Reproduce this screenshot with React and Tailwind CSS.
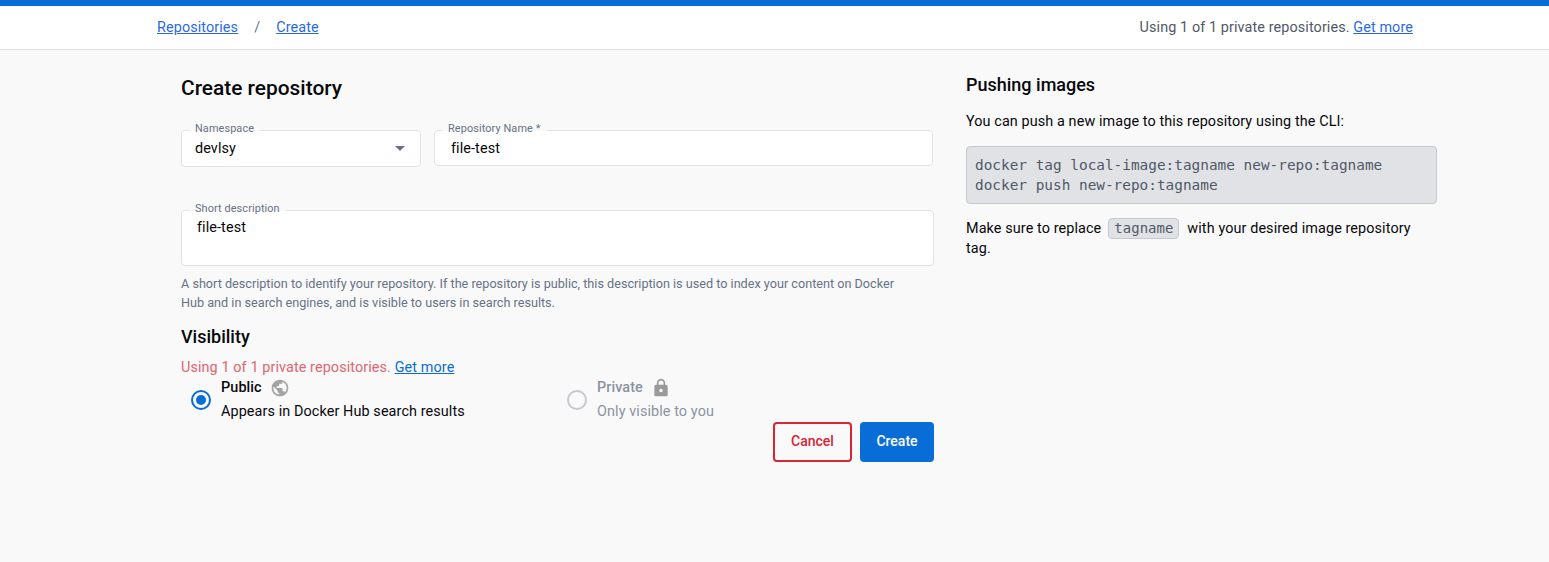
import React from "react";

function Field({ label, className, children }) {
  return (
    <div className={`relative rounded border border-[#e1e2e6] bg-white ${className}`}>
      <span className="absolute -top-[10px] left-[7px] bg-[linear-gradient(#f9f9fa_0_10px,#ffffff_10px)] px-[6px] text-[10.9px] leading-[16px] text-[#677285]">{label}</span>
      {children}
    </div>
  );
}

export default function App() {
  return (
    <div className="min-h-[562px] bg-[#f9f9fa] font-['Roboto',sans-serif] text-[14.4px] tracking-[0.1px] text-[#07080a]">
      <div className="h-[6px] bg-[#086dd7]" />
      <div className="flex h-[44px] items-center justify-between border-b border-[#e1e2e6] bg-white pl-[157px] pr-[136px] leading-[20px]">
        <div className="flex items-center text-[#2a6ae0]">
          <a className="underline">Repositories</a>
          <span className="mx-[16px] text-[#677285]">/</span>
          <a className="underline">Create</a>
        </div>
        <div className="text-[#505968]">
          Using 1 of 1 private repositories. <a className="text-[#2a6ae0] underline">Get more</a>
        </div>
      </div>

      <div className="flex pl-[181px]">
        <div className="w-[753px]">
          <h1 className="mt-[24px] text-[20.9px] font-medium leading-[28px] tracking-normal">Create repository</h1>

          <div className="mt-[28px] flex gap-[13px]">
            <Field label="Namespace" className="flex h-[37px] w-[240px] items-center justify-between pl-[13px] pr-[15px]">
              <span className="pt-[1px]">devlsy</span>
              <span className="h-0 w-0 border-x-[5px] border-t-[5px] border-x-transparent border-t-[#677285]" />
            </Field>
            <Field label="Repository Name *" className="mr-[1px] flex h-[36px] flex-1 items-center pl-[16px]">
              <span className="pt-[1px]">file-test</span>
            </Field>
          </div>

          <Field label="Short description" className="mt-[43px] h-[56px] pl-[15px] pt-[7px]">
            <span className="block leading-[20px]">file-test</span>
          </Field>

          <p className="mt-[8px] w-[730px] text-[12.65px] leading-[19px] tracking-normal text-[#677285]">
            A short description to identify your repository. If the repository is public, this description is used to index your content on Docker Hub and in search engines, and is visible to users in search results.
          </p>

          <h2 className="mt-[11px] text-[18px] font-medium leading-[28px] tracking-normal">Visibility</h2>

          <p className="mt-[7px] leading-[20px] text-[#e0666f]">
            Using 1 of 1 private repositories. <a className="text-[#086dd7] underline">Get more</a>
          </p>

          <div className="-mt-[2px] flex pl-[10px]">
            <div className="flex w-[376px] items-center">
              <span className="flex h-[20px] w-[20px] items-center justify-center rounded-full border-2 border-[#086dd7]">
                <span className="h-[10px] w-[10px] rounded-full bg-[#086dd7]" />
              </span>
              <div className="ml-[10px]">
                <div className="flex h-[24px] items-center font-medium">
                  Public
                  <svg className="ml-[8px]" width="20" height="20" viewBox="0 0 24 24" fill="#a3a3a3">
                    <path d="M12 2C6.48 2 2 6.48 2 12s4.48 10 10 10 10-4.48 10-10S17.52 2 12 2zm-1 17.93c-3.95-.49-7-3.85-7-7.93 0-.62.08-1.21.21-1.79L9 15v1c0 1.1.9 2 2 2v1.93zm6.9-2.54c-.26-.81-1-1.39-1.9-1.39h-1v-3c0-.55-.45-1-1-1H8v-2h2c.55 0 1-.45 1-1V7h2c1.1 0 2-.9 2-2v-.41c2.93 1.19 5 4.06 5 7.41 0 2.08-.8 3.97-2.1 5.39z" />
                  </svg>
                </div>
                <div className="h-[24px] leading-[24px]">Appears in Docker Hub search results</div>
              </div>
            </div>
            <div className="flex items-center text-[#8b93a0]">
              <span className="h-[20px] w-[20px] rounded-full border-2 border-[#c4c8d1]" />
              <div className="ml-[10px]">
                <div className="flex h-[24px] items-center font-medium">
                  Private
                  <svg className="ml-[8px]" width="20" height="20" viewBox="0 0 24 24" fill="#9a9a9a">
                    <path d="M18 8h-1V6c0-2.76-2.24-5-5-5S7 3.24 7 6v2H6c-1.1 0-2 .9-2 2v10c0 1.1.9 2 2 2h12c1.1 0 2-.9 2-2V10c0-1.1-.9-2-2-2zm-6 9c-1.1 0-2-.9-2-2s.9-2 2-2 2 .9 2 2-.9 2-2 2zm3.1-9H8.9V6c0-1.71 1.39-3.1 3.1-3.1 1.71 0 3.1 1.39 3.1 3.1v2z" />
                  </svg>
                </div>
                <div className="h-[24px] leading-[24px]">Only visible to you</div>
              </div>
            </div>
          </div>

          <div className="-mt-[2px] flex justify-end gap-[8px]">
            <button className="h-[40px] w-[79px] rounded border-2 border-[#d52536] pb-[1px] text-[14px] font-medium tracking-normal text-[#d52536]">Cancel</button>
            <button className="h-[40px] w-[74px] rounded bg-[#086dd7] pb-[1px] text-[14px] font-medium tracking-normal text-white">Create</button>
          </div>
        </div>

        <div className="ml-[32px] w-[471px]">
          <h2 className="mt-[21px] text-[18px] font-medium leading-[28px] tracking-normal">Pushing images</h2>
          <p className="mt-[11px] leading-[24px]">You can push a new image to this repository using the CLI:</p>
          <pre className="mt-[12px] h-[58px] rounded border border-[#c4c8d1] bg-[#e1e2e6] px-[8px] py-[8px] font-['DejaVu_Sans_Mono',monospace] text-[14.4px] leading-[20px] tracking-normal text-[#505968]">{"docker tag local-image:tagname new-repo:tagname\ndocker push new-repo:tagname"}</pre>
          <p className="mt-[14px] leading-[20px]">
            Make sure to replace
            <code className="ml-[7px] mr-[8px] inline-block h-[21px] rounded border border-[#c4c8d1] bg-[#e1e2e6] px-[5px] align-[0px] font-['DejaVu_Sans_Mono',monospace] text-[14px] leading-[19px] tracking-normal text-[#505968]">tagname</code>
            with your desired image repository tag.
          </p>
        </div>
      </div>
    </div>
  );
}
